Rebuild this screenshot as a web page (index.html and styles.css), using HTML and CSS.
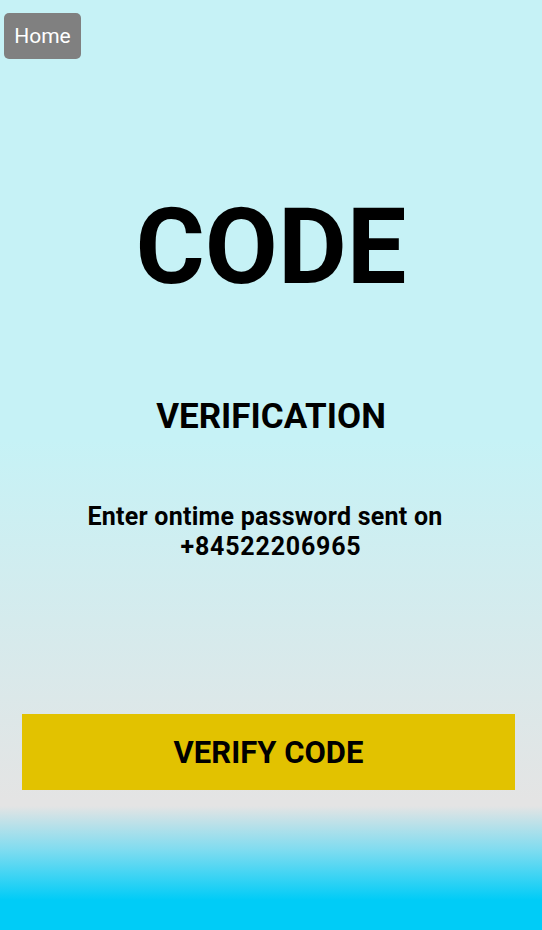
FILE: index.html
```html
<!DOCTYPE html>
<html>
<head>
<meta charset="utf-8">
<link rel="stylesheet" href="styles.css">
</head>
<body>
<div class="screen">
  <div class="topbar"><button class="home">Home</button></div>
  <h1 class="code">CODE</h1>
  <h2 class="verif">VERIFICATION</h2>
  <p class="info"><span class="line1">Enter ontime password sent on</span><br><span class="line2">+84522206965</span></p>
  <button class="verify">VERIFY CODE</button>
</div>
</body>
</html>
```
FILE: styles.css
```css
html, body { margin: 0; padding: 0; }
body {
  width: 542px;
  height: 930px;
  overflow: hidden;
  font-family: Roboto, "Noto Sans", sans-serif;
  background: linear-gradient(to bottom, #c6f2f6 0px, #c6f2f6 440px, #e4e4e4 800px, #e4e4e4 806px, #7fdcf0 850px, #00ccf7 900px, #00ccf7 930px);
}
.screen {
  display: flex;
  flex-direction: column;
  align-items: center;
  height: 930px;
}
.topbar { align-self: stretch; padding: 13px 0 0 4px; }
.home {
  display: block;
  width: 77px;
  height: 46px;
  background: #808080;
  color: #fff;
  border: 0;
  border-radius: 5px;
  font-family: Roboto, sans-serif;
  font-size: 21px;
  padding: 0;
}
.code {
  margin: 135px 0 0;
  font-size: 106px;
  font-weight: 700;
  line-height: 1;
  color: #000;
}
.verif {
  margin: 99px 0 0;
  font-size: 35px;
  font-weight: 700;
  line-height: 1;
}
.info {
  margin: 68px 0 0;
  font-size: 25px;
  font-weight: 700;
  letter-spacing: 0.25px;
  line-height: 30px;
  text-align: center;
}
.line1 { padding-right: 12px; }
.line2 { letter-spacing: 0.8px; }
.verify {
  margin: 152px 5px 0 0;
  width: 493px;
  height: 76px;
  background: #e2c200;
  border: 0;
  font-family: Roboto, sans-serif;
  font-size: 31px;
  font-weight: 700;
  color: #000;
  padding: 0;
}
```
